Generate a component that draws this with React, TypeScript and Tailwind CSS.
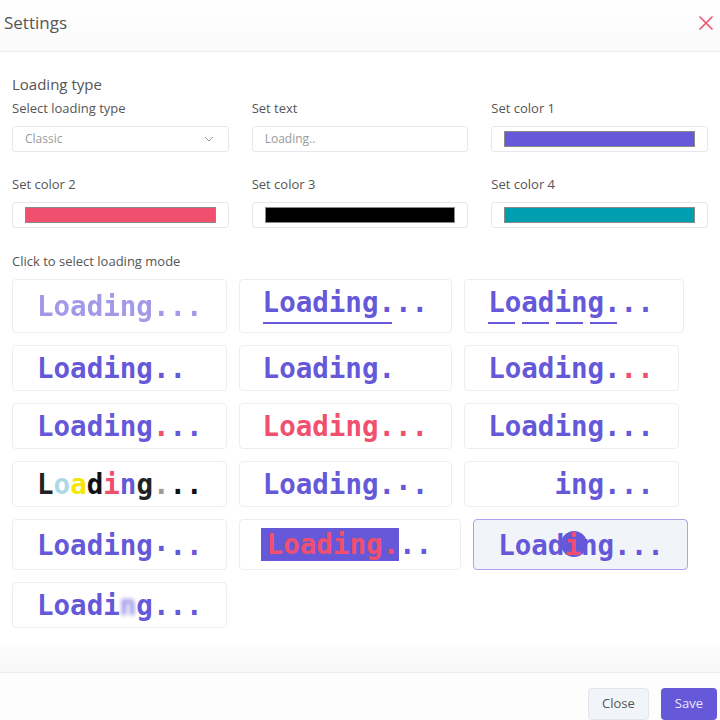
import React from 'react';

const Field = ({ label, children }: { label: string; children: React.ReactNode }) => (
  <div className="flex flex-col">
    <div className="text-[13px] leading-[16px] text-[#555]">{label}</div>
    <div className="mt-[10px] h-[26px] rounded-[3px] border border-[#e6e8ec] bg-white">{children}</div>
  </div>
);

const Swatch = ({ color }: { color: string }) => (
  <div className="flex h-full items-center px-3">
    <div className="h-[16px] w-full border border-[#8a8a8a]" style={{ backgroundColor: color }} />
  </div>
);

const Card = ({ children, active, className = '' }: { children: React.ReactNode; active?: boolean; className?: string }) => (
  <div
    className={`flex items-center rounded-[4px] border py-1.5 ${
      active ? 'border-[#aaa4f0] bg-[#f1f4f9]' : 'border-[#eceef2] bg-white'
    } ${className || 'pl-[24px] pr-[23px]'}`}
  >
    <div className="font-['DejaVu_Sans_Mono',monospace] text-[27.5px] font-bold leading-[32px] text-[#6558d9] whitespace-pre">
      {children}
    </div>
  </div>
);

const Hidden = ({ children }: { children: React.ReactNode }) => <span className="text-transparent">{children}</span>;
const Red = ({ children }: { children: React.ReactNode }) => <span className="text-[#f0506e]">{children}</span>;
const Up = ({ children }: { children: React.ReactNode }) => <span className="relative -top-1">{children}</span>;

export default function App() {
  return (
    <div className="min-h-[720px] w-[720px] bg-white font-['Open_Sans','Noto_Sans',sans-serif] text-[#444]">
      {/* header */}
      <div className="flex h-[52px] items-center justify-between border-b border-[#e6ebf1] bg-gradient-to-b from-white to-[#fafafa] pb-[5px] pl-1 pr-[7px]">
        <div className="text-[17px] text-[#555]">Settings</div>
        <svg width="14" height="14" viewBox="0 0 14 14">
          <path d="M1 1 L13 13 M13 1 L1 13" stroke="#f0506e" strokeWidth="1.6" strokeLinecap="round" />
        </svg>
      </div>

      {/* body */}
      <div className="px-3 pt-[22px]">
        <div className="text-[15px] leading-[20px] text-[#555]">Loading type</div>
        <div className="mt-[6px] grid grid-cols-3 gap-x-[23px] gap-y-[24px]">
          <Field label="Select loading type">
            <div className="flex h-full items-center justify-between pl-3 pr-[14px] text-[12px] text-[#9a9a9a]">
              <span>Classic</span>
              <svg width="10" height="6" viewBox="0 0 10 6">
                <path d="M1 1 L5 5 L9 1" fill="none" stroke="#999" strokeWidth="1" />
              </svg>
            </div>
          </Field>
          <Field label="Set text">
            <div className="flex h-full items-center pl-3 text-[12px] text-[#9a9a9a]">Loading..</div>
          </Field>
          <Field label="Set color 1">
            <Swatch color="#6558d9" />
          </Field>
          <Field label="Set color 2">
            <Swatch color="#f0506e" />
          </Field>
          <Field label="Set color 3">
            <Swatch color="#000000" />
          </Field>
          <Field label="Set color 4">
            <Swatch color="#009fb0" />
          </Field>
        </div>

        <div className="mt-[25px] text-[13px] leading-[16px] text-[#555]">Click to select loading mode</div>

        <div className="mt-[10px] flex flex-wrap gap-x-3 gap-y-3">
          {/* row 1 */}
          <Card>
            <span className="opacity-60">Loading...</span>
          </Card>
          <Card className="items-start pl-[23px] pr-[23px]">
            <div className="flex flex-col pb-[2px]">
              <span>Loading...</span>
              <div className="mt-[4px] h-[2px] w-[129px] bg-[#6558d9]" />
            </div>
          </Card>
          <Card className="items-start pl-[23px] pr-[29px]">
            <div className="flex flex-col pb-[2px]">
              <span>Loading...</span>
              <div className="mt-[4px] flex gap-[7px]">
                <div className="h-[2px] w-[27px] bg-[#6558d9]" />
                <div className="h-[2px] w-[27px] bg-[#6558d9]" />
                <div className="h-[2px] w-[27px] bg-[#6558d9]" />
                <div className="h-[2px] w-[27px] bg-[#6558d9]" />
              </div>
            </div>
          </Card>

          {/* row 2 */}
          <Card>
            Loading..<Hidden>.</Hidden>
          </Card>
          <Card className="pl-[23px] pr-[23px]">
            Loading.<Hidden>..</Hidden>
          </Card>
          <Card className="pl-[23px] pr-[24px]">
            Loading.<Red>..</Red>
          </Card>

          {/* row 3 */}
          <Card>
            Loading<Red>.</Red>..
          </Card>
          <Card className="pl-[23px] pr-[23px]">
            <Red>Loading...</Red>
          </Card>
          <Card className="pl-[23px] pr-[24px]">Loading...</Card>

          {/* row 4 */}
          <Card>
            <span className="text-[#222]">L</span>
            <span className="text-[#add8e6]">o</span>
            <span className="text-[#f5e800]">a</span>
            <span className="text-[#111]">d</span>
            <span className="text-[#f0506e]">i</span>
            <span className="text-[#6558d9]">n</span>
            <span className="text-[#222]">g</span>
            <span className="text-[#9a9a9a]">.</span>
            <span className="text-[#111]">..</span>
          </Card>
          <Card className="pl-[23px] pr-[23px]">
            Loading.<Up>.</Up>.
          </Card>
          <Card className="pl-[23px] pr-[24px]">
            <Hidden>Load</Hidden>ing...
          </Card>

          {/* row 5 */}
          <Card>
            Loading<Up>.</Up>..
          </Card>
          <Card className="pl-[21px] pr-[28px]">
            <span className="my-[2px] inline-block bg-[#6558d9] pl-[6px] leading-[33px] text-[#f0506e]">Loading.</span>..
          </Card>
          <Card active className="pl-[24px] pr-[23px]">
            Load
            <span className="relative inline-block">
              <span className="absolute left-[-3px] top-[2px] h-[26px] w-[26px] rounded-full bg-[#6558d9]" />
              <span className="relative text-[#f0506e]">i</span>
            </span>
            ng...
          </Card>

          {/* row 6 */}
          <Card>
            Loadi<span className="inline-block opacity-70 blur-[2px]">n</span>g...
          </Card>
        </div>
      </div>

      <div className="mt-[17px] h-[27px] bg-gradient-to-b from-[#fdfdfd] to-[#f8f8f8]" />
      {/* footer */}
      <div className="flex justify-end gap-3 border-t border-[#ececec] bg-[#fdfdfd] pr-[3px] pt-[15px]">
        <button className="h-[32px] rounded-[4px] border border-[#e2e6eb] bg-[#f1f4f8] px-[13px] text-[13px] text-[#555]">
          Close
        </button>
        <button className="h-[32px] rounded-[4px] bg-[#6558d9] px-[14px] text-[13px] text-[#ece9ff]">Save</button>
      </div>
    </div>
  );
}
